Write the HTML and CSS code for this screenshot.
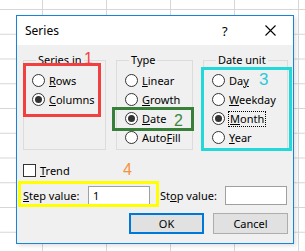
FILE: index.html
```html
<!DOCTYPE html>
<html>
<head>
<meta charset="utf-8">
<link rel="stylesheet" href="styles.css">
</head>
<body>
<div class="dialog">
  <div class="titlebar">
    <span class="title">Series</span>
    <span class="help">?</span>
    <span class="close"><svg width="11" height="11" viewBox="0 0 11 11"><path d="M0.5 0.5L10.5 10.5M10.5 0.5L0.5 10.5" stroke="#000" stroke-width="1.1" fill="none"/></svg></span>
  </div>
  <div class="content">
    <div class="groups">
      <fieldset class="group g1">
        <legend>Series in</legend>
        <div class="opt"><span class="radio"></span><span><u>R</u>ows</span></div>
        <div class="opt"><span class="radio on"></span><span><u>C</u>olumns</span></div>
      </fieldset>
      <fieldset class="group g2">
        <legend>Type</legend>
        <div class="opt"><span class="radio"></span><span><u>L</u>inear</span></div>
        <div class="opt"><span class="radio"></span><span><u>G</u>rowth</span></div>
        <div class="opt"><span class="radio on"></span><span><u>D</u>ate</span></div>
        <div class="opt"><span class="radio"></span><span>Auto<u>F</u>ill</span></div>
      </fieldset>
      <fieldset class="group g3">
        <legend>Date unit</legend>
        <div class="opt"><span class="radio"></span><span>Da<u>y</u></span></div>
        <div class="opt"><span class="radio"></span><span><u>W</u>eekday</span></div>
        <div class="opt"><span class="radio on"></span><span class="focus"><u>M</u>onth</span></div>
        <div class="opt"><span class="radio"></span><span><u>Y</u>ear</span></div>
      </fieldset>
    </div>
    <div class="trend"><span class="check"></span><span><u>T</u>rend</span></div>
    <div class="steps">
      <span class="lbl"><u>S</u>tep value:</span>
      <span class="input">1</span>
      <span class="lbl lbl2">St<u>o</u>p value:</span>
      <span class="input"></span>
    </div>
    <div class="buttons">
      <span class="btn ok">OK</span>
      <span class="btn">Cancel</span>
    </div>
  </div>
  <div class="mark red"></div>
  <div class="num n1">1</div>
  <div class="mark green"></div>
  <div class="num n2">2</div>
  <div class="mark cyan"></div>
  <div class="num n3">3</div>
  <div class="mark yellow"></div>
  <div class="num n4">4</div>
</div>
</body>
</html>
```
FILE: styles.css
```css
html, body {
  margin: 0;
  padding: 0;
}
body {
  width: 305px;
  height: 251px;
  overflow: hidden;
  background-color: #fff;
  background-image:
    linear-gradient(to right, #d6d6d6 1px, transparent 1px),
    linear-gradient(to bottom, #d6d6d6 1px, transparent 1px);
  background-size: 64px 24.75px;
  background-position: 42px 9px;
  font-family: "Noto Sans", sans-serif;
  font-size: 11px;
  color: #000;
  padding: 15px 0 0 16px;
  box-sizing: border-box;
}
.dialog {
  position: relative;
  width: 278px;
  height: 229px;
  box-sizing: border-box;
  border: 1px solid #1883d7;
  background: #f0f0f0;
  box-shadow: 2px 2px 4px rgba(0,0,0,0.12);
}
.titlebar {
  height: 29px;
  background: #fff;
  display: flex;
  align-items: center;
  padding-left: 8px;
}
.title {
  font-size: 12px;
  flex: 1;
}
.help {
  font-size: 13px;
  width: 12px;
  margin-right: 31px;
}
.close {
  display: flex;
  margin-right: 17px;
}
.content {
  padding: 7px 5px 0 6px;
}
.groups {
  display: flex;
  height: 98px;
}
.group {
  margin: 0;
  padding: 3px 0 0 8px;
  border: 1px solid #dcdcdc;
  box-sizing: border-box;
  height: 98px;
  min-width: 0;
}
.group legend {
  margin-left: 4px;
  padding: 0 2px;
  line-height: 16px;
}
.g1 { width: 83px; }
.g2 { width: 77px; margin-left: 10px; }
.g3 { width: 85px; margin-left: 10px; }
.opt {
  display: flex;
  align-items: center;
  height: 19px;
  gap: 4px;
}
.radio {
  width: 13px;
  height: 13px;
  box-sizing: border-box;
  border: 1px solid #333;
  border-radius: 50%;
  background: #fff;
  display: flex;
  align-items: center;
  justify-content: center;
  flex: none;
}
.radio.on::after {
  content: "";
  width: 7px;
  height: 7px;
  border-radius: 50%;
  background: #333;
}
.focus {
  outline: 1px dotted #000;
  outline-offset: 0;
  padding: 0 1px;
  line-height: 14px;
}
.trend {
  display: flex;
  align-items: center;
  gap: 4px;
  height: 14px;
  margin-top: 13px;
}
.check {
  width: 13px;
  height: 13px;
  box-sizing: border-box;
  border: 1px solid #333;
  background: #fff;
}
.steps {
  display: flex;
  align-items: center;
  height: 20px;
  margin-top: 8px;
}
.lbl {
  width: 65px;
}
.lbl2 {
  margin-left: 10px;
}
.input {
  width: 62px;
  height: 19px;
  box-sizing: border-box;
  border: 1px solid #a0a0a0;
  background: #fff;
  padding-left: 4px;
  line-height: 17px;
}
.buttons {
  display: flex;
  justify-content: flex-end;
  gap: 9px;
  margin-top: 8px;
}
.btn {
  width: 75px;
  height: 21px;
  box-sizing: border-box;
  border: 1px solid #adadad;
  background: #e1e1e1;
  display: flex;
  align-items: center;
  justify-content: center;
}
.btn.ok {
  border: 2px solid #0078d7;
}
.mark {
  position: absolute;
  box-sizing: border-box;
  border: 3px solid;
}
.red { left: 6px; top: 47px; width: 78px; height: 54px; border-color: #f04040; }
.green { left: 95px; top: 91px; width: 82px; height: 24px; border-color: #38803a; }
.cyan { left: 184px; top: 51px; width: 91px; height: 84px; border-color: #22d8d8; }
.yellow { left: 1px; top: 165px; width: 141px; height: 26px; border-color: #ffff00; }
.num {
  position: absolute;
  font-family: "Liberation Sans", sans-serif;
  font-size: 16px;
  line-height: 16px;
}
.n1 { left: 67px; top: 35px; color: #f04040; }
.n2 { left: 157px; top: 97px; color: #3a8a3a; }
.n3 { left: 242px; top: 56px; color: #2cc8d8; font-size: 17px; }
.n4 { left: 106px; top: 146px; color: #f5923e; }
```
